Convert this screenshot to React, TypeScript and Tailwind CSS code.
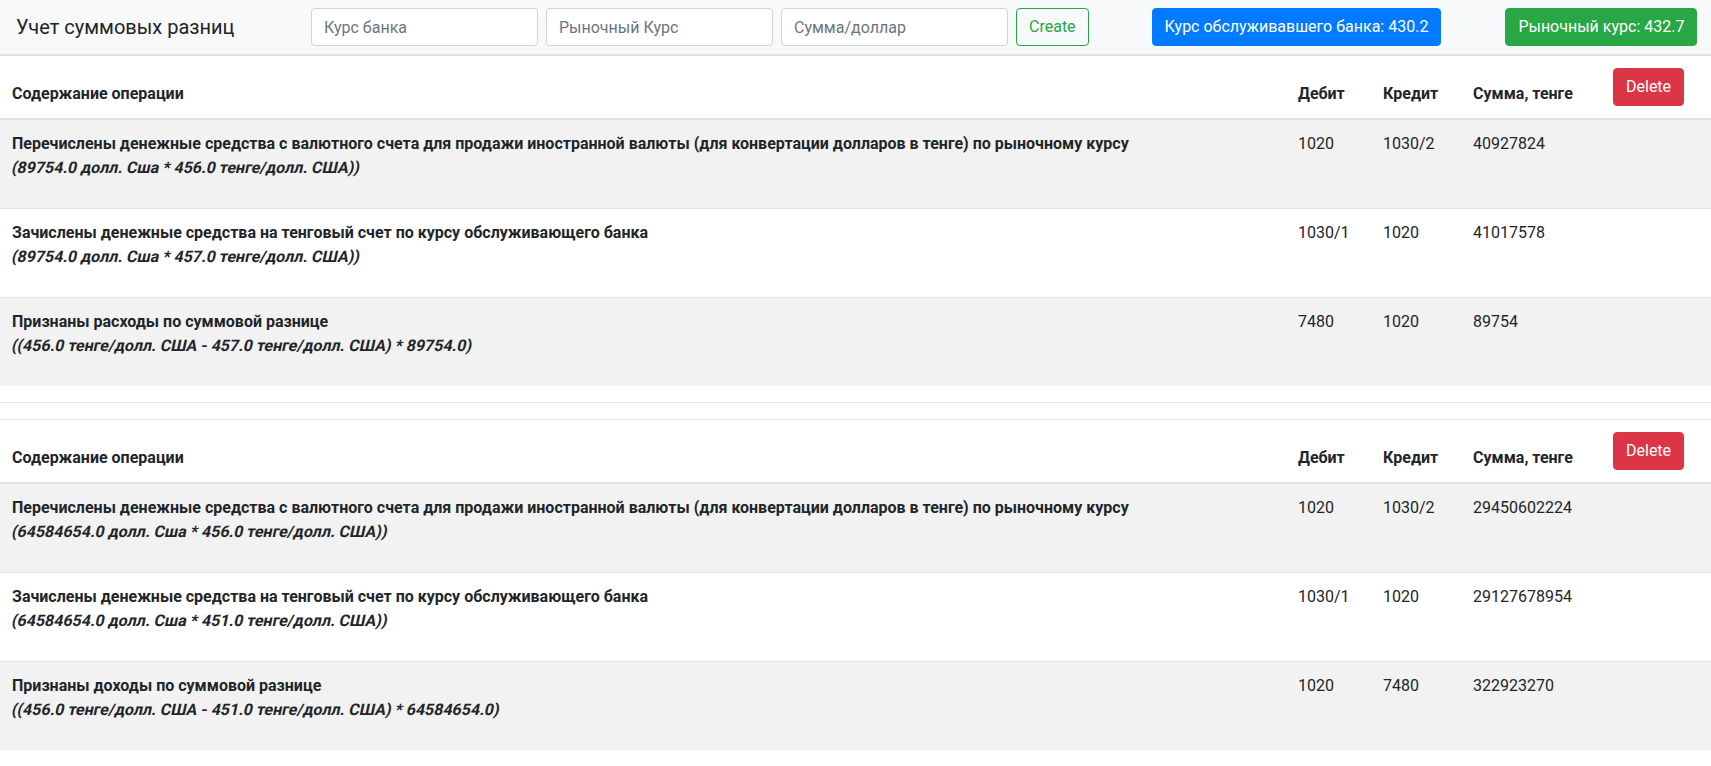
import React from "react";

type Row = {
  title: string;
  formula: string;
  debit: string;
  credit: string;
  sum: string;
};

const tables: Row[][] = [
  [
    {
      title:
        "Перечислены денежные средства с валютного счета для продажи иностранной валюты (для конвертации долларов в тенге) по рыночному курсу",
      formula: "(89754.0 долл. Сша * 456.0 тенге/долл. США))",
      debit: "1020",
      credit: "1030/2",
      sum: "40927824",
    },
    {
      title: "Зачислены денежные средства на тенговый счет по курсу обслуживающего банка",
      formula: "(89754.0 долл. Сша * 457.0 тенге/долл. США))",
      debit: "1030/1",
      credit: "1020",
      sum: "41017578",
    },
    {
      title: "Признаны расходы по суммовой разнице",
      formula: "((456.0 тенге/долл. США - 457.0 тенге/долл. США) * 89754.0)",
      debit: "7480",
      credit: "1020",
      sum: "89754",
    },
  ],
  [
    {
      title:
        "Перечислены денежные средства с валютного счета для продажи иностранной валюты (для конвертации долларов в тенге) по рыночному курсу",
      formula: "(64584654.0 долл. Сша * 456.0 тенге/долл. США))",
      debit: "1020",
      credit: "1030/2",
      sum: "29450602224",
    },
    {
      title: "Зачислены денежные средства на тенговый счет по курсу обслуживающего банка",
      formula: "(64584654.0 долл. Сша * 451.0 тенге/долл. США))",
      debit: "1030/1",
      credit: "1020",
      sum: "29127678954",
    },
    {
      title: "Признаны доходы по суммовой разнице",
      formula: "((456.0 тенге/долл. США - 451.0 тенге/долл. США) * 64584654.0)",
      debit: "1020",
      credit: "7480",
      sum: "322923270",
    },
  ],
];

const th = "text-left font-bold px-3 py-3 border-t border-[#dee2e6] border-b-2";
const td = "px-3 py-3 border-t border-[#dee2e6]";

const OperationsTable: React.FC<{ rows: Row[] }> = ({ rows }) => (
  <table className="w-full border-collapse text-[#212529] mb-4">
    <thead>
      <tr className="align-bottom">
        <th className={th}>Содержание операции</th>
        <th className={`${th} w-[85px]`}>Дебит</th>
        <th className={`${th} w-[90px]`}>Кредит</th>
        <th className={`${th} w-[140px]`}>Сумма, тенге</th>
        <th className={`${th} w-[110px]`}>
          <button className="bg-[#dc3545] text-white font-normal rounded px-3 py-1.5 leading-6 border border-[#dc3545]">
            Delete
          </button>
        </th>
      </tr>
    </thead>
    <tbody>
      {rows.map((r, i) => (
        <tr key={i} className={i % 2 === 0 ? "bg-[#f2f2f2] align-top" : "align-top"}>
          <td className={td}>
            <p className="font-bold mb-4">
              {r.title}
              <br />
              {/* oblique of the upright face, as in the screenshot */}
              <span className="inline-block -skew-x-[12deg]">{r.formula}</span>
            </p>
          </td>
          <td className={td}>{r.debit}</td>
          <td className={td}>{r.credit}</td>
          <td className={td}>{r.sum}</td>
          <td className={td}></td>
        </tr>
      ))}
    </tbody>
  </table>
);

const inputCls =
  "w-[227px] h-[38px] mr-2 px-3 border border-[#ced4da] rounded bg-white placeholder-[#6c757d] outline-none shrink-0";

const App: React.FC = () => {
  return (
    <div className="min-h-screen bg-white font-['Roboto',sans-serif] text-base leading-6 text-[#212529]">
      {/* Top bar */}
      <nav className="flex items-center bg-[#f8f9fa] border-b border-[#dee2e6] px-4 py-2 whitespace-nowrap">
        <span className="w-[295px] shrink-0 text-xl leading-[30px]">Учет суммовых разниц</span>
        <input placeholder="Курс банка" className={inputCls} />
        <input placeholder="Рыночный Курс" className={inputCls} />
        <input placeholder="Сумма/доллар" className={inputCls} />
        <button className="h-[38px] shrink-0 px-3 border border-[#28a745] text-[#28a745] rounded">
          Create
        </button>
        <button className="h-[38px] shrink-0 ml-[63px] px-3 bg-[#007bff] border border-[#007bff] text-white rounded">
          Курс обслуживавшего банка: 430.2
        </button>
        <button className="h-[38px] shrink-0 ml-[64px] px-3 bg-[#28a745] border border-[#28a745] text-white rounded">
          Рыночный курс: 432.7
        </button>
      </nav>

      <OperationsTable rows={tables[0]} />
      <hr className="border-t border-[rgba(0,0,0,0.1)] my-4" />
      <OperationsTable rows={tables[1]} />
    </div>
  );
};

export default App;
